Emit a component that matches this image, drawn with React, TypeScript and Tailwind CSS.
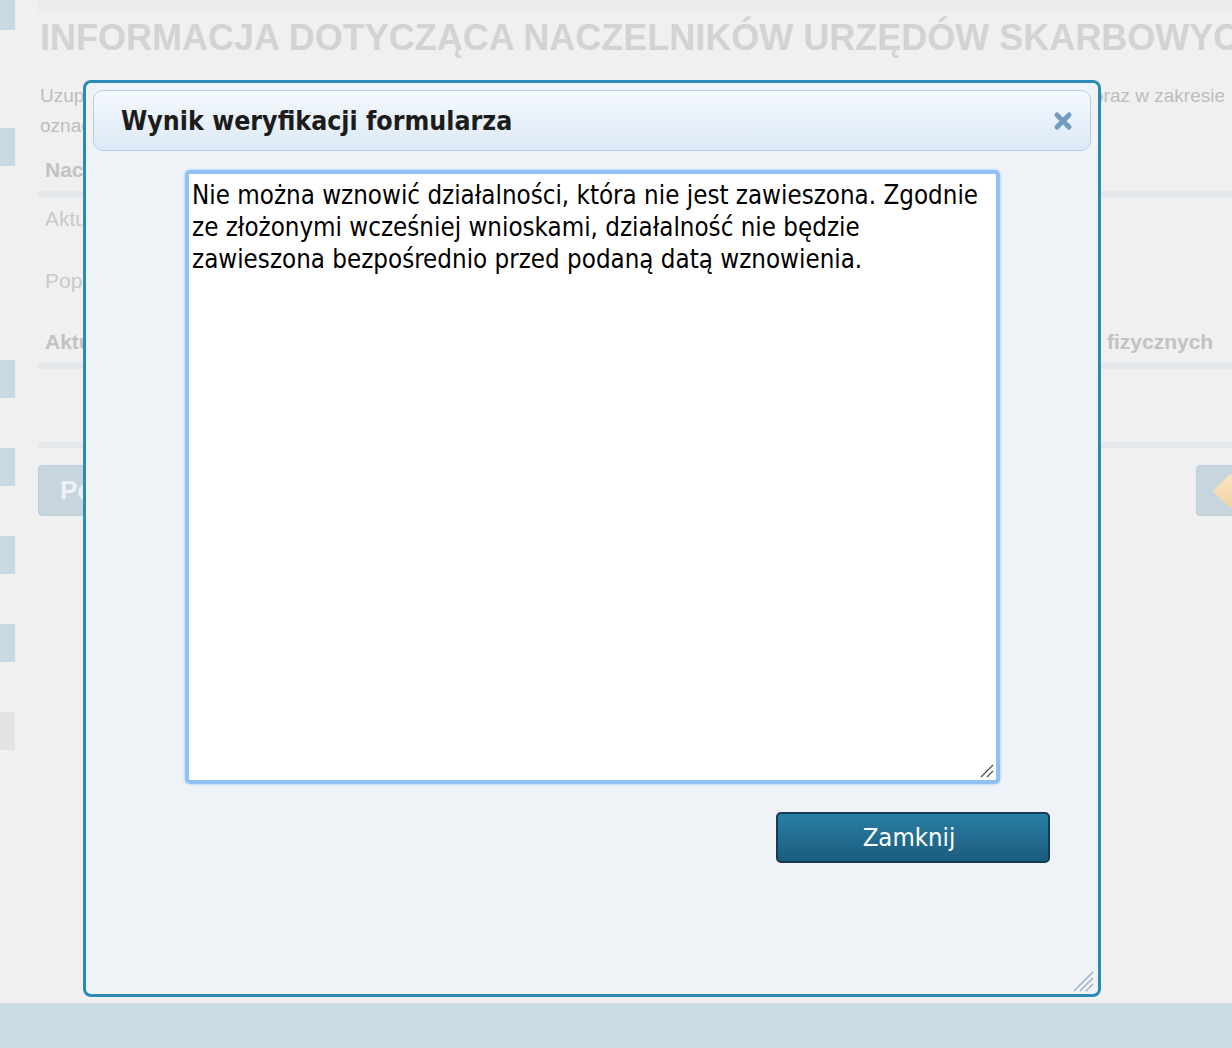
import { ReactNode } from 'react';

// ============================================================================
// BACKGROUND PAGE (faded behind the modal)
// ============================================================================

const SIDE_BLOCKS = [
  { mt: 'mt-0', h: 'h-[30px]', bg: 'bg-[#c6dae4]' },
  { mt: 'mt-[98px]', h: 'h-[38px]', bg: 'bg-[#c6dae4]' },
  { mt: 'mt-[194px]', h: 'h-[38px]', bg: 'bg-[#c6dae4]' },
  { mt: 'mt-[50px]', h: 'h-[38px]', bg: 'bg-[#c6dae4]' },
  { mt: 'mt-[50px]', h: 'h-[38px]', bg: 'bg-[#c6dae4]' },
  { mt: 'mt-[50px]', h: 'h-[38px]', bg: 'bg-[#c6dae4]' },
  { mt: 'mt-[50px]', h: 'h-[38px]', bg: 'bg-[#e3e3e3]' },
];

function Sidebar() {
  return (
    <div className="flex w-[15px] shrink-0 flex-col">
      {SIDE_BLOCKS.map((b, i) => (
        <div key={i} className={`${b.mt} ${b.h} ${b.bg} w-[15px]`} />
      ))}
    </div>
  );
}

function Row({ left, right, width, className }: { left: ReactNode; right?: ReactNode; width: string; className: string }) {
  return (
    <div className={`flex whitespace-nowrap ${className}`}>
      <span className={`${width} shrink-0`}>{left}</span>
      {right && <span>{right}</span>}
    </div>
  );
}

function BackgroundPage() {
  return (
    <div className="flex h-[1003px]">
      <Sidebar />
      <div className="ml-[23px] flex min-w-0 flex-1 flex-col font-['Liberation_Sans',Arial,sans-serif]">
        <div className="h-[12px] bg-[#ebebeb]" />
        <h1 className="mt-[6px] ml-[2px] whitespace-nowrap text-[36px] font-bold leading-[40px] text-[#d3d3d3]">
          INFORMACJA DOTYCZĄCA NACZELNIKÓW URZĘDÓW SKARBOWYCH
        </h1>
        <div className="mt-[23px] ml-[2px] text-[19px] leading-[30px] text-[#bdbdbd]">
          <Row
            left="Uzupełnij poniższe informacje w zakresie naczelnika urzędu skarbowego"
            right="oraz w zakresie"
            width="w-[1053px]"
            className=""
          />
          <div className="whitespace-nowrap">oznaczone pola są wymagane</div>
        </div>
        <div className="mt-[15px] ml-[7px] text-[21px] font-bold leading-[28px] text-[#c2c2c2]">Naczelnik urzędu skarbowego</div>
        <div className="mt-[7px] h-[6px] bg-[#e5e8ea]" />
        <div className="mt-[9px] ml-[7px] text-[21px] leading-[26px] text-[#c9c9c9]">Aktualny naczelnik</div>
        <div className="mt-[36px] ml-[7px] text-[21px] leading-[26px] text-[#c9c9c9]">Poprzedni naczelnik</div>
        <Row
          left={<span className="ml-[7px]">Aktualny naczelnik urzędu skarbowego w zakresie</span>}
          right="fizycznych"
          width="w-[1069px]"
          className="mt-[34px] text-[21px] font-bold leading-[28px] text-[#c2c2c2]"
        />
        <div className="mt-[7px] h-[6px] bg-[#e5e8ea]" />
        <div className="mt-[73px] h-[6px] bg-[#e5e8ea]" />
        <div className="mt-[17px] flex h-[51px] justify-between">
          <div className="flex w-[150px] items-center rounded-[4px] border border-[#bfcdd6] bg-[#c6d5de] pl-[21px] text-[26px] font-bold text-[#eef2f5]">
            Powrót
          </div>
          <div className="-mr-[24px] flex w-[60px] items-center rounded-[4px] border border-[#bfcdd6] bg-[#c6d5de] pl-[21px]">
            <div className="h-[24px] w-[24px] rotate-45 bg-gradient-to-br from-[#f8e6c4] to-[#f3d3a2]" />
          </div>
        </div>
      </div>
    </div>
  );
}

// ============================================================================
// MODAL
// ============================================================================

function CloseIcon() {
  return (
    <svg width="20" height="20" viewBox="0 0 20 20">
      <path d="M4 4 L16 16 M16 4 L4 16" stroke="#709cc2" strokeWidth="5" strokeLinecap="round" />
    </svg>
  );
}

function Grip({ color, lines }: { color: string; lines: number }) {
  return (
    <svg width="22" height="22" viewBox="0 0 22 22">
      {lines === 3 ? (
        <path d="M2 21 L21 2 M8 21 L21 8 M14 21 L21 14" stroke={color} strokeWidth="1.6" />
      ) : (
        <path d="M8 20 L20 8 M14 20 L20 14" stroke={color} strokeWidth="1.4" />
      )}
    </svg>
  );
}

const MESSAGE = [
  'Nie można wznowić działalności, która nie jest zawieszona. Zgodnie',
  'ze złożonymi wcześniej wnioskami, działalność nie będzie',
  'zawieszona bezpośrednio przed podaną datą wznowienia.',
];

function ResultDialog() {
  return (
    <div className="absolute left-[83px] top-[80px] flex h-[917px] w-[1018px] flex-col rounded-[8px] border-[3px] border-[#2a8bb8] bg-[#eff3f7] font-['DejaVu_Sans_Condensed','DejaVu_Sans',sans-serif]">
      {/* Header */}
      <div className="mx-[7px] mt-[7px] flex h-[61px] items-center justify-between rounded-[10px] border border-[#b2cfe9] bg-gradient-to-b from-[#f5f9fd] to-[#dce9f6] pl-[27px] pr-[17px]">
        <h2 className="text-[26.5px] font-bold text-[#1c1c1c]">Wynik weryfikacji formularza</h2>
        <CloseIcon />
      </div>

      {/* Message */}
      <div className="ml-[99px] mt-[19px] h-[614px] w-[815px] rounded-[5px] border-[4px] border-[#8fc1f6] bg-white shadow-[0_0_2px_1px_#c3ddfa]">
        <div className="relative h-full w-full px-[3px] pt-[5px] text-[25.7px] leading-[32px] text-black">
          {MESSAGE.map((line) => (
            <div key={line} className="whitespace-nowrap">{line}</div>
          ))}
          <div className="absolute bottom-[1px] right-[1px]">
            <Grip color="#555" lines={2} />
          </div>
        </div>
      </div>

      {/* Actions */}
      <div className="ml-[690px] mt-[28px] flex h-[51px] w-[274px] items-center justify-center rounded-[5px] border-2 border-[#123c56] bg-gradient-to-b from-[#297fa4] to-[#1b5c7d] pr-[8px] text-[25.5px] text-white">
        Zamknij
      </div>

      <div className="mt-auto mb-[2px] mr-[4px] self-end">
        <Grip color="#9fb5c6" lines={3} />
      </div>
    </div>
  );
}

// ============================================================================
// PAGE
// ============================================================================

export default function App() {
  return (
    <div className="relative h-[1048px] w-[1232px] overflow-hidden bg-[#f0f0f0]">
      <BackgroundPage />
      <div className="h-[45px] bg-[#cbdbe3]" />
      <ResultDialog />
    </div>
  );
}
